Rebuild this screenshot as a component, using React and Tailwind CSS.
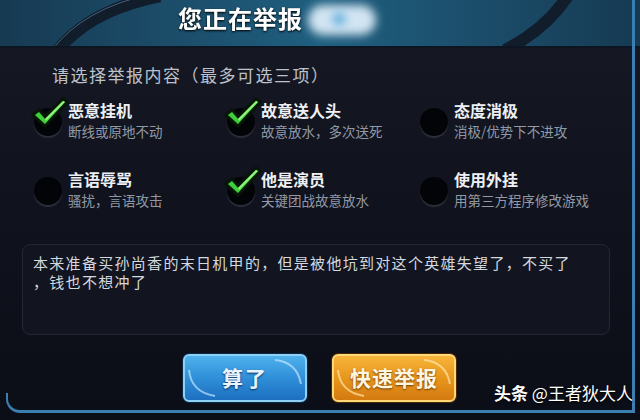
import React from "react";

const options = [
  { title: "恶意挂机", sub: "断线或原地不动", checked: true },
  { title: "故意送人头", sub: "故意放水，多次送死", checked: true },
  { title: "态度消极", sub: "消极/优势下不进攻", checked: false },
  { title: "言语辱骂", sub: "骚扰，言语攻击", checked: false },
  { title: "他是演员", sub: "关键团战故意放水", checked: true },
  { title: "使用外挂", sub: "用第三方程序修改游戏", checked: false },
];

function Check() {
  return (
    <svg width="40" height="34" viewBox="0 0 40 34" className="absolute left-[-4px] top-[-12px]">
      <path d="M2 19 L9 13 L15 20 L33 2 L38 6 L15 31 Z" fill="#0a200a" stroke="#081408" strokeWidth="2" strokeLinejoin="round" />
      <path d="M5 19 L9 16 L15 23 L33 5 L35 6 L15 28 Z" fill="#3fcf3a" />
      <path d="M15 23 L33 5 L35 6 L16 25 Z" fill="#93f27e" />
    </svg>
  );
}

function Option({ title, sub, checked }) {
  return (
    <div className="flex items-start gap-[6px]">
      <div className="relative mt-[8px] w-[28px] h-[28px] shrink-0">
        <div className="w-[28px] h-[28px] rounded-full bg-[#030407] shadow-[0_2px_1px_#2a2f3a]" />
        {checked && <Check />}
      </div>
      <div className="flex flex-col">
        <span className="text-[16px] leading-[20px] font-bold text-[#eef0f4]">{title}</span>
        <span className="text-[13.5px] leading-[20px] text-[#9299a6] mt-[1px]">{sub}</span>
      </div>
    </div>
  );
}

function Swoosh({ color }) {
  return (
    <svg width="120" height="44" viewBox="0 0 120 44" className="absolute left-0 top-0">
      <path d="M4 14 Q6 36 30 40" stroke={color} strokeWidth="2" fill="none" opacity="0.7" />
      <path d="M90 4 Q112 6 116 28" stroke={color} strokeWidth="2" fill="none" opacity="0.7" />
    </svg>
  );
}

export default function App() {
  return (
    <div
      className="relative w-[640px] h-[420px] overflow-hidden bg-[linear-gradient(180deg,#171a26_0%,#11141e_40%,#0b0e17_100%)]"
      style={{ fontFamily: '"Noto Sans CJK SC", "Noto Sans", sans-serif' }}
    >
      {/* header band */}
      <div className="relative h-[48px] bg-[linear-gradient(90deg,#173a52_0%,#1c4f6c_30%,#1f5f80_50%,#1b4d6a_75%,#163a52_100%)] border-b-2 border-[#0c1520] overflow-hidden">
        <svg width="640" height="48" className="absolute left-0 top-0">
          <path d="M58 50 Q90 10 160 -4" stroke="#121d2c" strokeWidth="12" fill="none" />
          <path d="M52 50 Q84 8 152 -6" stroke="#6fa8c4" strokeWidth="1" fill="none" opacity="0.5" />
          <path d="M505 50 Q545 30 568 -4" stroke="#121d2c" strokeWidth="12" fill="none" />
        </svg>
        <div className="absolute left-[308px] top-[5px] w-[68px] h-[30px] rounded-full bg-[#e6f4ff] blur-[5px] opacity-90" />
        <div className="absolute left-[332px] top-[12px] w-[14px] h-[14px] rounded-full bg-[#6fb4e0] blur-[4px]" />
        <div className="absolute left-[178px] top-[2px] text-[24px] leading-[32px] font-bold text-white tracking-[1px] drop-shadow-[0_1px_1px_#000]">
          您正在举报
        </div>
      </div>

      {/* right frame line */}
      <div className="absolute right-[5px] top-0 h-[412px] w-[3px] bg-[#3b7fb0]" />

      <div className="pl-[52px] pt-[15px] text-[17px] leading-[24px] text-[#bcc1cb] tracking-[1.5px]">
        请选择举报内容（最多可选三项）
      </div>

      <div className="grid grid-cols-[193px_193px_190px] gap-y-[28px] pl-[34px] pt-[13px]">
        {options.map((o) => (
          <Option key={o.title} {...o} />
        ))}
      </div>

      <div className="mx-[22px] mt-[34px] w-[588px] h-[91px] rounded-[8px] bg-[#121520] border border-[#232735] px-[10px] pt-[8px] text-[15px] leading-[19px] text-[#d4d8df] tracking-[1.3px]">
        本来准备买孙尚香的末日机甲的，但是被他坑到对这个英雄失望了，不买了
        <br />
        ，钱也不想冲了
      </div>

      <div className="flex gap-[25px] pl-[183px] pt-[19px]">
        <div className="relative w-[124px] h-[48px] rounded-[6px] border-2 border-[#8fd0f5] bg-[linear-gradient(180deg,#4fb1ec_0%,#2f8fd8_50%,#1d6fc0_100%)] shadow-[0_0_0_1px_#0b2a4a] flex items-center justify-center">
          <Swoosh color="#bfe6ff" />
          <span className="relative text-[21px] font-bold text-[#eaf4ff] tracking-[2px] [text-shadow:0_1px_2px_#0a3060]">算了</span>
        </div>
        <div className="relative w-[124px] h-[48px] rounded-[6px] border-2 border-[#ffd878] bg-[linear-gradient(180deg,#f7b43a_0%,#e8961c_50%,#d47a10_100%)] shadow-[0_0_0_1px_#4a2a05] flex items-center justify-center">
          <Swoosh color="#ffe7a8" />
          <span className="relative text-[21px] font-bold text-[#fff6e0] tracking-[1px] [text-shadow:0_1px_2px_#6a3a00]">快速举报</span>
        </div>
      </div>

      {/* bottom frame */}
      <div className="absolute left-[6px] right-[5px] bottom-[7px] h-[20px] border-b-[3px] border-l-[2px] border-[#3b7fb0] rounded-bl-[14px]" />

      <div className="absolute left-[494px] top-[381px] text-[17px] leading-[24px] text-white [text-shadow:0_1px_2px_#000]">
        <span className="font-bold">头条</span> @王者狄大人
      </div>
    </div>
  );
}
